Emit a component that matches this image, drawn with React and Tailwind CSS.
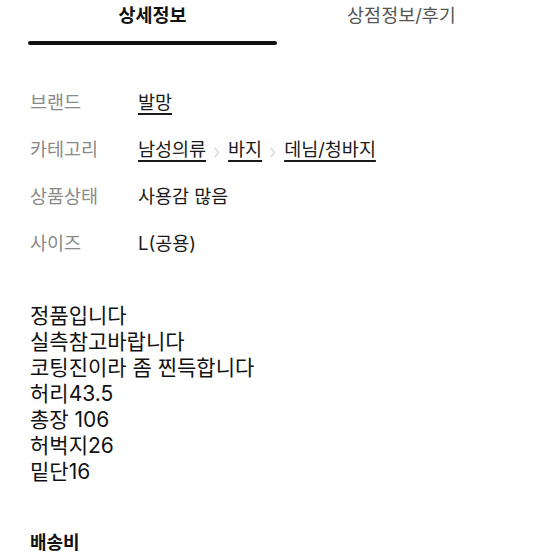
import React from "react";

const font = { fontFamily: 'Inter, "Noto Sans CJK KR", sans-serif' };

function Chevron() {
  return (
    <svg width="6" height="11" viewBox="0 0 6 11" className="mx-[8px] mt-[5px]" fill="none">
      <path d="M1 1 L4.5 5.5 L1 10" stroke="#cccccc" strokeWidth="1.1" strokeLinecap="round" strokeLinejoin="round" />
    </svg>
  );
}

function Row({ label, children }) {
  return (
    <div className="flex h-[47px] items-center">
      <div className="w-[108px] text-[18.5px] text-[#8a8a8a]">{label}</div>
      <div className="flex items-center text-[18.5px] text-[#1a1a1a]">{children}</div>
    </div>
  );
}

const linkCls = "underline decoration-[1.5px] underline-offset-[4px]";

export default function App() {
  const lines = [
    "정품입니다",
    "실측참고바랍니다",
    "코팅진이라 좀 찐득합니다",
    "허리43.5",
    "총장 106",
    "허벅지26",
    "밑단16",
  ];
  return (
    <div className="w-[554px] h-[554px] overflow-hidden bg-white" style={font}>
      <div className="flex px-[28px]">
        <div className="flex-1 flex flex-col">
          <div className="pt-[2px] text-center text-[18.5px] leading-[26px] font-bold text-[#111]">상세정보</div>
          <div className="mt-[13px] h-[4px] rounded-full bg-[#111]" />
        </div>
        <div className="flex-1 flex flex-col">
          <div className="pt-[2px] text-center text-[18.5px] leading-[26px] text-[#555]">상점정보/후기</div>
        </div>
      </div>
      <div className="mt-[34px] px-[30px]">
        <Row label="브랜드">
          <span className={linkCls}>발망</span>
        </Row>
        <Row label="카테고리">
          <span className={linkCls}>남성의류</span>
          <Chevron />
          <span className={linkCls}>바지</span>
          <Chevron />
          <span className={linkCls}>데님/청바지</span>
        </Row>
        <Row label="상품상태">
          <span>사용감 많음</span>
        </Row>
        <Row label="사이즈">
          <span>L(공용)</span>
        </Row>
      </div>
      <div className="mt-[36px] px-[30px] text-[21px] leading-[26px] text-[#111]">
        {lines.map((l) => (
          <div key={l}>{l}</div>
        ))}
      </div>
      <div className="mt-[45px] px-[30px] text-[18px] leading-[26px] font-bold text-[#111]">배송비</div>
    </div>
  );
}
